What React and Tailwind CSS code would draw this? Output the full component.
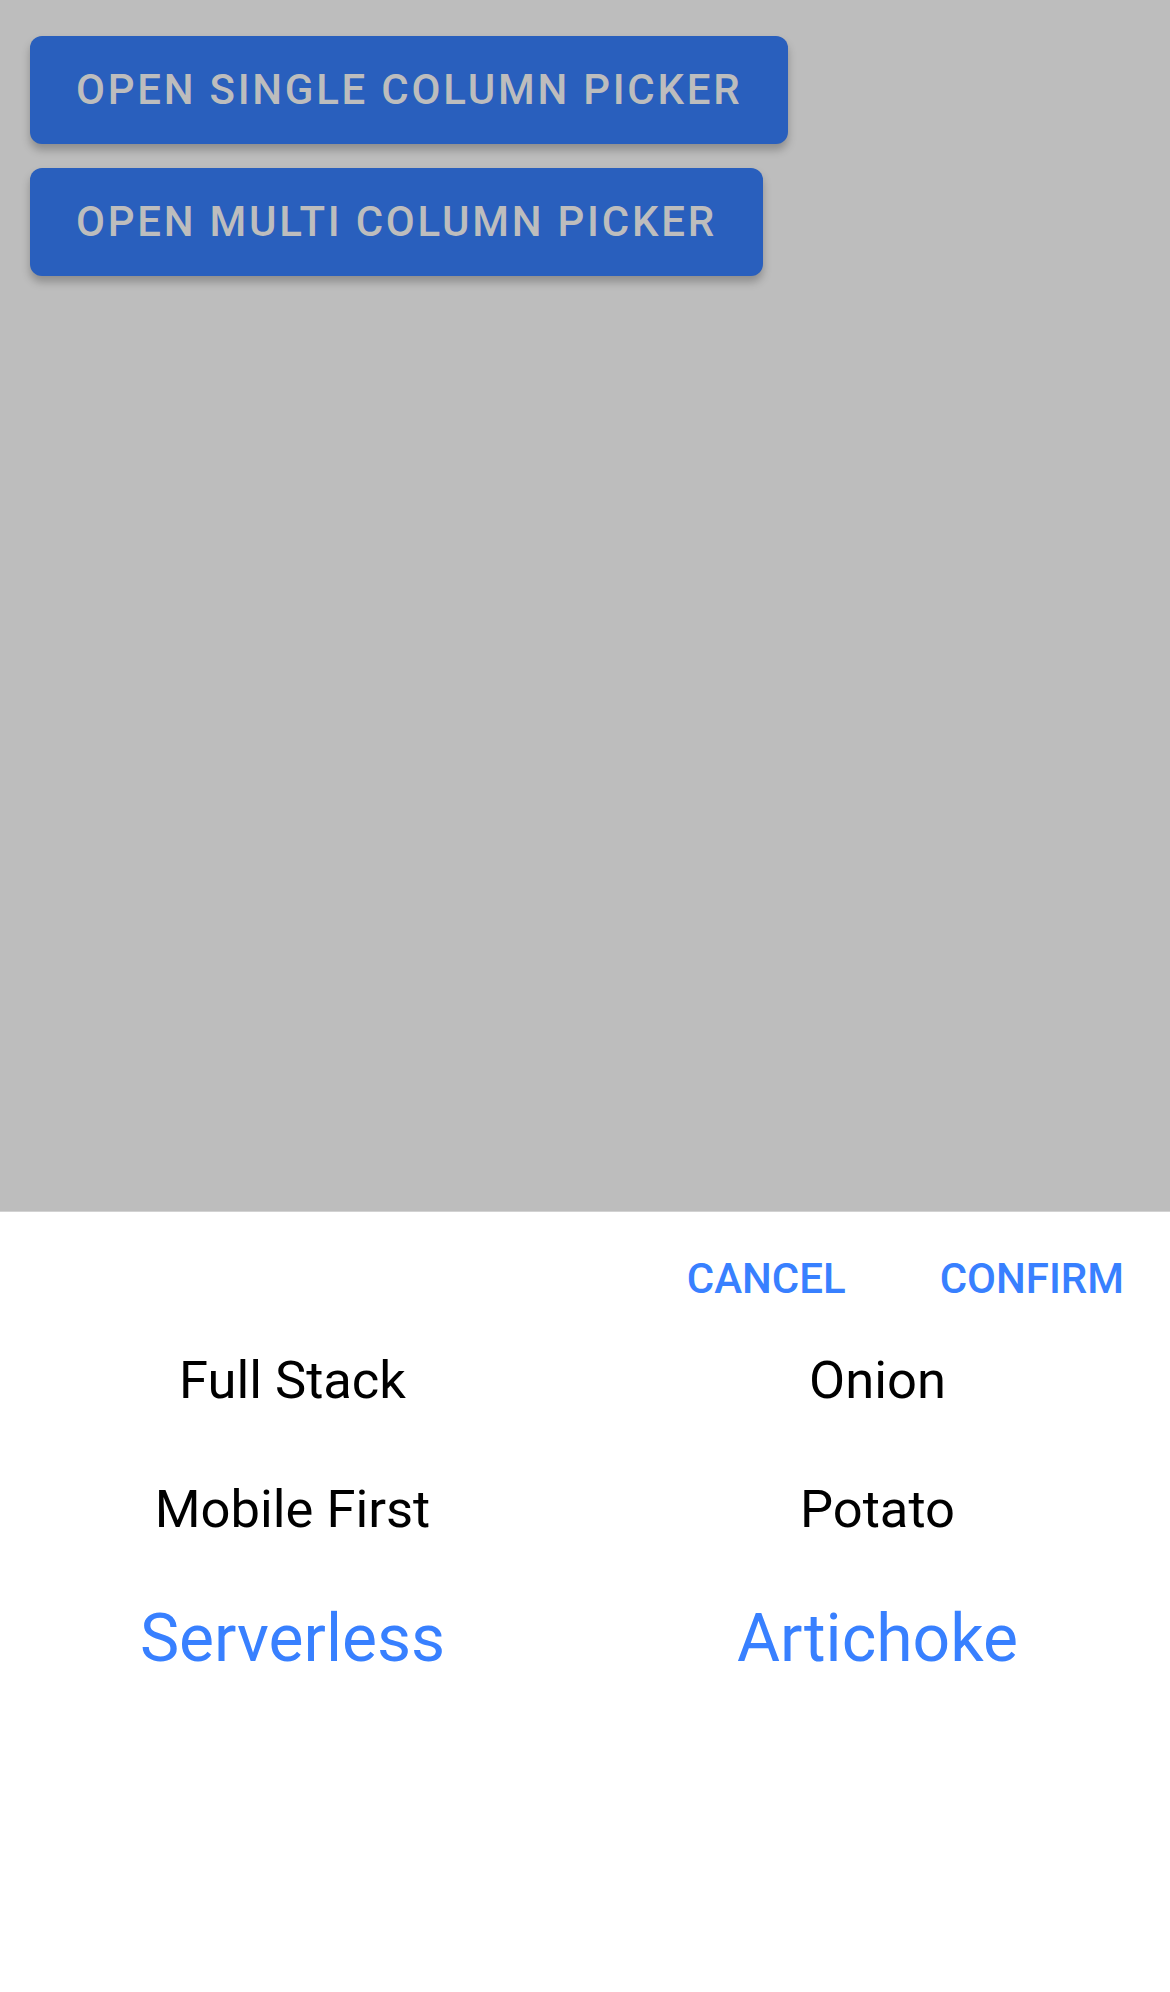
import React from "react";

const columns = [
  ["Full Stack", "Mobile First", "Serverless"],
  ["Onion", "Potato", "Artichoke"],
];

const Column = ({ items }) => {
  return (
    <div className="flex-1 flex flex-col">
      {items.map((item, i) => {
        const selected = i === items.length - 1;
        return (
          <div key={item} className="h-[129px] flex items-center justify-center">
            <span
              className={
                selected
                  ? "leading-none text-[66px] text-[#3880ff]"
                  : "leading-none text-[52.5px] text-black"
              }
            >
              {item}
            </span>
          </div>
        );
      })}
    </div>
  );
};

const App = () => {
  return (
    <div
      className="w-[1170px] h-[1992px] bg-[#bdbdbd] flex flex-col overflow-hidden"
      style={{ fontFamily: "Roboto, 'Noto Sans', sans-serif" }}
    >
      <div className="flex-1 flex flex-col items-start pt-[36px] pl-[30px] gap-[24px]">
        <button className="h-[108px] pl-[46px] pr-[46px] rounded-[12px] bg-[#295fbd] text-[#bdbdbd] text-[42px] font-medium tracking-[2.75px] leading-none shadow-[0_6px_8px_rgba(0,0,0,0.25)]">
          OPEN SINGLE COLUMN PICKER
        </button>
        <button className="h-[108px] pl-[46px] pr-[46px] rounded-[12px] bg-[#295fbd] text-[#bdbdbd] text-[42px] font-medium tracking-[2.75px] leading-none shadow-[0_6px_8px_rgba(0,0,0,0.25)]">
          OPEN MULTI COLUMN PICKER
        </button>
      </div>
      <div className="h-[781px] bg-white border-t border-[#d2d2d2] flex flex-col">
        <div className="flex justify-end gap-[94px] pr-[46px] pt-[46px] pb-[16px]">
          <span className="text-[42px] leading-none font-medium text-[#3880ff]">CANCEL</span>
          <span className="text-[42px] leading-none font-medium text-[#3880ff]">CONFIRM</span>
        </div>
        <div className="flex">
          {columns.map((items, i) => (
            <Column key={i} items={items} />
          ))}
        </div>
      </div>
    </div>
  );
};

export default App;
